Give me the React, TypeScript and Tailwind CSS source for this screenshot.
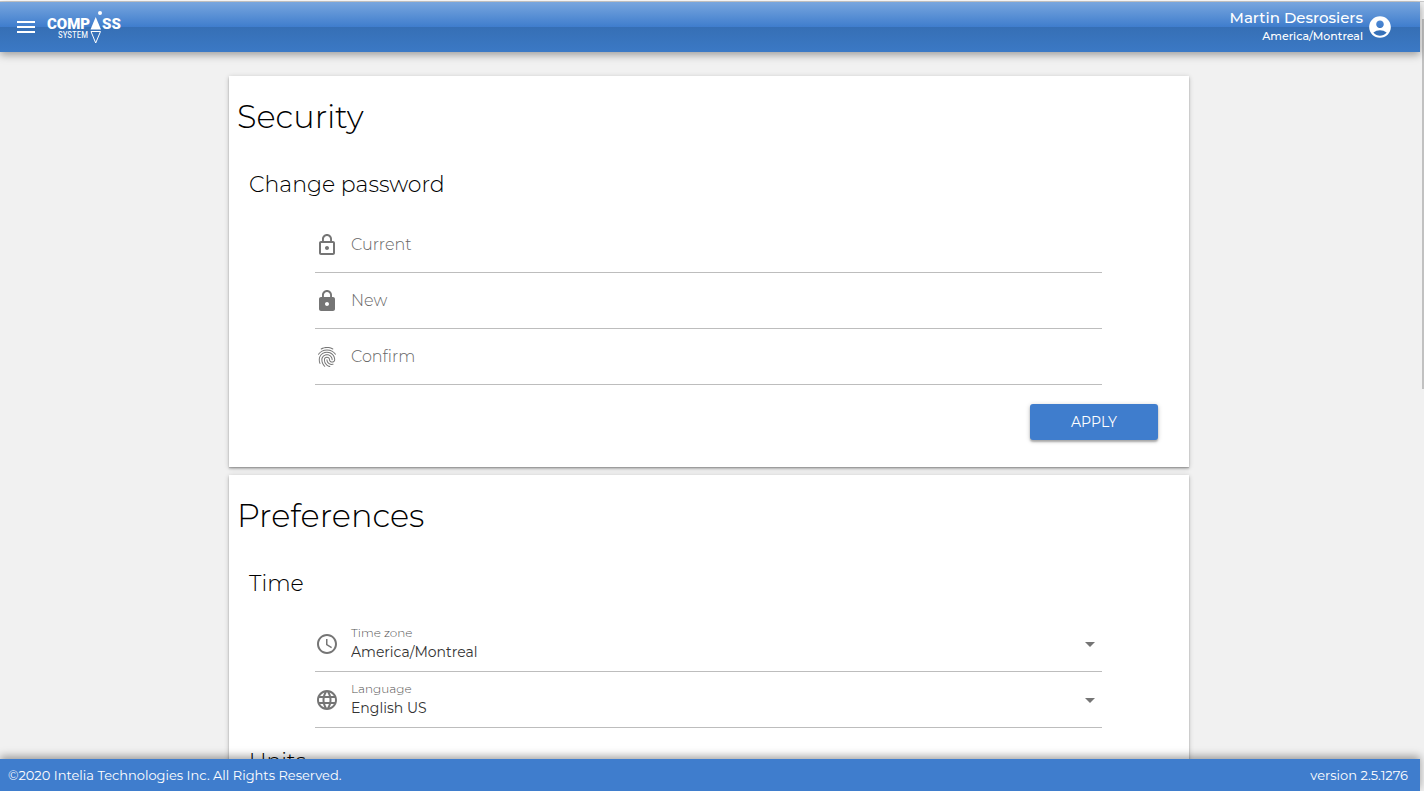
import type { ReactNode } from "react";
import type { IconType } from "react-icons";
import {
  MdAccessTime,
  MdAccountCircle,
  MdArrowDropDown,
  MdFingerprint,
  MdLanguage,
  MdLock,
  MdLockOutline,
  MdMenu,
} from "react-icons/md";

function Logo() {
  return (
    <svg width="76" height="36" viewBox="0 0 76 36" role="img" aria-label="Compass System" fill="#fff">
      <g className="font-['Roboto',sans-serif] text-[15px] font-black">
        <text x="1" y="20">COMP</text>
        <text x="56" y="20">SS</text>
      </g>
      <text x="12" y="29" className="font-['Roboto_Condensed','Open_Sans_Condensed','Roboto',sans-serif] text-[9px]">
        SYSTEM
      </text>
      <circle cx="54" cy="4" r="2" />
      <path d="M49.700 8 55 20.500H44.500Z" />
      <path d="M45 22.500H54.500L49.700 34Z" fill="none" stroke="#fff" strokeWidth="1" />
    </svg>
  );
}

function PasswordField({ id, label, icon: Icon }: { id: string; label: string; icon: IconType }) {
  return (
    <div className="flex h-14 items-center gap-3 border-b border-[#bdbdbd]">
      <Icon className="size-6 shrink-0 text-[#757575]" aria-hidden />
      <label htmlFor={id} className="text-base font-light text-[#666]">
        {label}
      </label>
      <input id={id} type="password" className="h-full min-w-0 flex-1 bg-transparent outline-none" />
    </div>
  );
}

function SelectField({
  id,
  label,
  icon: Icon,
  options,
}: {
  id: string;
  label: string;
  icon: IconType;
  options: string[];
}) {
  return (
    <div className="flex h-14 items-center gap-3 border-b border-[#bdbdbd]">
      <Icon className="size-6 shrink-0 text-[#757575]" aria-hidden />
      <div className="min-w-0 flex-1 pb-0.5">
        <label htmlFor={id} className="block text-xs leading-[18px] font-light text-[#555]">
          {label}
        </label>
        <select
          id={id}
          className="block h-5 w-full appearance-none bg-transparent text-sm leading-5 text-[#333] outline-none"
        >
          {options.map((o) => (
            <option key={o}>{o}</option>
          ))}
        </select>
      </div>
      <MdArrowDropDown className="pointer-events-none size-6 shrink-0 text-[#757575]" aria-hidden />
    </div>
  );
}

function Card({ title, children }: { title: string; children: ReactNode }) {
  return (
    <section className="bg-white px-2 pt-[21px] pb-[27px] shadow-[0_1px_5px_rgba(0,0,0,0.2),0_2px_2px_rgba(0,0,0,0.14),0_1px_1px_rgba(0,0,0,0.15)]">
      <h1 className="mb-3.5 text-[32px] leading-10 font-light">{title}</h1>
      {children}
    </section>
  );
}

function Group({ title, children }: { title: string; children?: ReactNode }) {
  return (
    <div className="px-3 pt-[18px]">
      <h2 className="mb-4 text-[22px] leading-8 font-light">{title}</h2>
      <div className="pr-[67px] pl-[66px]">{children}</div>
    </div>
  );
}

export default function App() {
  return (
    <div className="flex h-screen flex-col bg-[#f1f1f1] font-['Montserrat','Inter',sans-serif] text-black">
      <div className="h-0.5 shrink-0 border-b border-[#ccc] bg-white" />
      <div className="flex min-h-0 flex-1">
        <div className="flex min-w-0 flex-1 flex-col">
          <header className="z-10 flex h-[50px] shrink-0 items-center bg-[linear-gradient(#78a6de,#3f7dcd_50%,#366fb5_50%,#3b79c5)] px-3.5 text-white shadow-[0_3px_8px_rgba(0,0,0,0.35)]">
            <button type="button" aria-label="Menu">
              <MdMenu className="size-6" />
            </button>
            <a href="#home" className="ml-2">
              <Logo />
            </a>
            <div className="ml-auto pb-[3px] text-right font-medium">
              <div className="text-[15px] leading-5">Martin Desrosiers</div>
              <div className="text-[11px] leading-4">America/Montreal</div>
            </div>
            <button type="button" aria-label="Account" className="mr-[13px] ml-1">
              <MdAccountCircle className="size-[26px]" />
            </button>
          </header>

          <main className="min-h-0 flex-1 overflow-y-auto py-6 pr-0.5 [scrollbar-width:none]">
            <div className="mx-auto flex max-w-[960px] flex-col gap-2">
              <Card title="Security">
                <Group title="Change password">
                  <form>
                    <PasswordField id="current" label="Current" icon={MdLockOutline} />
                    <PasswordField id="new" label="New" icon={MdLock} />
                    <PasswordField id="confirm" label="Confirm" icon={MdFingerprint} />
                  </form>
                </Group>
                <div className="flex justify-end pt-[19px] pr-[23px]">
                  <button
                    type="button"
                    className="h-9 w-32 rounded-[3px] bg-[#3f7dcd] text-sm text-white shadow-[0_1px_5px_rgba(0,0,0,0.2),0_2px_2px_rgba(0,0,0,0.25)]"
                  >
                    APPLY
                  </button>
                </div>
              </Card>

              <Card title="Preferences">
                <Group title="Time">
                  <SelectField id="zone" label="Time zone" icon={MdAccessTime} options={["America/Montreal"]} />
                  <SelectField id="language" label="Language" icon={MdLanguage} options={["English US"]} />
                </Group>
                <Group title="Units" />
              </Card>
            </div>
          </main>

          <footer className="z-10 flex h-8 shrink-0 items-center justify-between bg-[#3f7dcd] pt-0.5 pr-3 pl-2 text-[13px] text-white shadow-[0_-3px_8px_rgba(0,0,0,0.35)]">
            <span>©2020 Intelia Technologies Inc. All Rights Reserved.</span>
            <span>version 2.5.1276</span>
          </footer>
        </div>
        <div className="flex w-1 shrink-0 justify-end pt-[17px]" aria-hidden>
          <div className="h-[370px] w-0.5 bg-[#c1c1c1]" />
        </div>
      </div>
    </div>
  );
}
